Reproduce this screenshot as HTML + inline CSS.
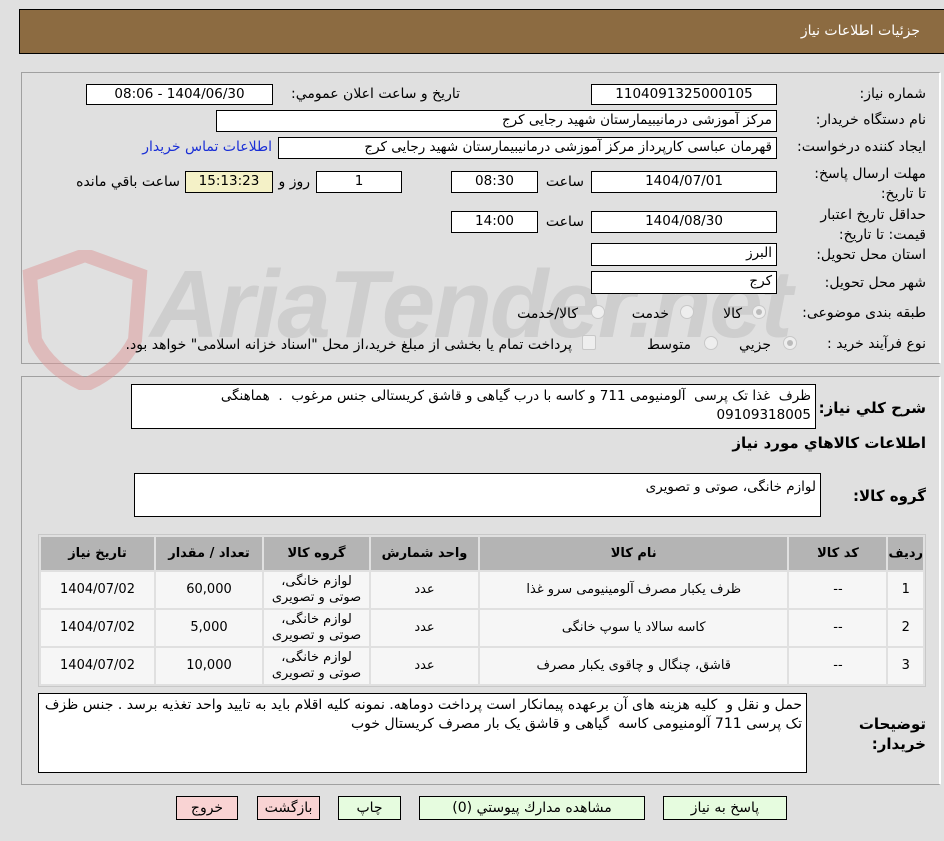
<!DOCTYPE html>
<html><head><meta charset="utf-8"><style>
body{margin:0;width:944px;height:841px;background:#e0e0e0;position:relative;overflow:hidden;font-family:Tahoma,"DejaVu Sans","Noto Sans CJK SC",sans-serif;font-size:13px;color:#000;direction:rtl}
.a{position:absolute}
.hdr{left:19px;top:9px;width:930px;height:43px;background:#8c6b41;border:1px solid #000;border-right:none}
.hdr span{position:absolute;right:30px;top:13px;color:#fff;font-size:14px}
.pan{border:1px solid #a0a0a0;border-right:2px solid #fff;background:#e0e0e0}
.in{position:absolute;background:#fff;border:1px solid #000;box-sizing:border-box;padding:0 4px;line-height:19px;font-size:13.5px;white-space:nowrap;overflow:hidden}
.c{text-align:center}
.l{position:absolute;font-size:14px;white-space:nowrap}
.rad{position:absolute;width:12px;height:12px;border-radius:50%;border:1px solid #c8c8c8;background:#eee}
.rad.s::after{content:"";position:absolute;left:3px;top:3px;width:6px;height:6px;border-radius:50%;background:#bbb}
table{border-collapse:separate;border-spacing:2px;position:absolute;left:38px;top:534px;width:888px;background:#e0e0e0;border:1px solid #c8c8c8}
th{background:#b4b4b4;height:33px;padding:0;font-size:13px;font-weight:bold}
td{background:#f6f6f6;height:36px;padding:0;text-align:center;font-size:13px;line-height:16px}
.btn{position:absolute;top:796px;height:24px;border:1px solid #000;box-sizing:border-box;text-align:center;line-height:22px;font-size:14px}
.g{background:#e6fcdf}.r{background:#f9d3d3}
.wm{position:absolute;left:150px;top:250px;font-size:96px;color:rgba(185,185,185,0.45);font-family:"Liberation Sans",sans-serif;font-weight:bold;direction:ltr;letter-spacing:-2px;font-style:italic}
</style></head><body>
<div class="a hdr"><span>جزئيات اطلاعات نياز</span></div>
<div class="a pan" style="left:21px;top:72px;width:917px;height:290px"></div>
<div class="a pan" style="left:21px;top:376px;width:917px;height:407px"></div>
<div class="wm">AriaTender.net</div>
<svg class="a" style="left:20px;top:250px" width="130" height="140" viewBox="0 0 130 140"><path d="M65 5 L120 25 L115 90 Q100 120 65 135 Q30 120 15 90 L10 25 Z" fill="none" stroke="rgba(220,150,150,0.5)" stroke-width="14"/></svg>

<div class="l" style="right:18px;top:86px">شماره نیاز:</div>
<div class="in c" style="left:591px;top:84px;width:186px;height:21px">1104091325000105</div>
<div class="l" style="right:484px;top:86px">تاريخ و ساعت اعلان عمومي:</div>
<div class="in c" style="left:86px;top:84px;width:187px;height:21px">1404/06/30 - 08:06</div>

<div class="l" style="right:18px;top:112px">نام دستگاه خریدار:</div>
<div class="in" style="left:216px;top:110px;width:561px;height:22px">مرکز آموزشی درمانیبیمارستان شهید رجایی کرج</div>

<div class="l" style="right:18px;top:139px">ایجاد کننده درخواست:</div>
<div class="in" style="left:278px;top:137px;width:499px;height:22px">قهرمان عباسی کارپرداز مرکز آموزشی درمانیبیمارستان شهید رجایی کرج</div>
<div class="l" style="right:672px;top:139px;color:#1a2fd6">اطلاعات تماس خریدار</div>

<div class="l" style="right:18px;top:164px;line-height:20px;width:115px;white-space:normal">مهلت ارسال پاسخ: تا تاریخ:</div>
<div class="in c" style="left:591px;top:171px;width:186px;height:22px">1404/07/01</div>
<div class="l" style="right:360px;top:174px">ساعت</div>
<div class="in c" style="left:451px;top:171px;width:87px;height:22px">08:30</div>
<div class="in c" style="left:316px;top:171px;width:86px;height:22px">1</div>
<div class="l" style="right:634px;top:174px">روز و</div>
<div class="in c" style="left:185px;top:171px;width:88px;height:22px;background:#f4f1c7">15:13:23</div>
<div class="l" style="right:764px;top:174px">ساعت باقي مانده</div>

<div class="l" style="right:18px;top:205px;line-height:20px;width:115px;white-space:normal">حداقل تاریخ اعتبار قیمت: تا تاریخ:</div>
<div class="in c" style="left:591px;top:211px;width:186px;height:22px">1404/08/30</div>
<div class="l" style="right:360px;top:214px">ساعت</div>
<div class="in c" style="left:451px;top:211px;width:87px;height:22px">14:00</div>

<div class="l" style="right:18px;top:247px">استان محل تحویل:</div>
<div class="in" style="left:591px;top:243px;width:186px;height:23px">البرز</div>
<div class="l" style="right:18px;top:275px">شهر محل تحویل:</div>
<div class="in" style="left:591px;top:271px;width:186px;height:23px">کرج</div>

<div class="l" style="right:18px;top:305px">طبقه بندی موضوعی:</div>
<div class="rad s" style="left:752px;top:305px"></div><div class="l" style="right:202px;top:306px">کالا</div>
<div class="rad" style="left:680px;top:305px"></div><div class="l" style="right:275px;top:306px">خدمت</div>
<div class="rad" style="left:591px;top:305px"></div><div class="l" style="right:366px;top:306px">کالا/خدمت</div>

<div class="l" style="right:18px;top:336px">نوع فرآیند خرید :</div>
<div class="rad s" style="left:783px;top:336px"></div><div class="l" style="right:173px;top:337px">جزيي</div>
<div class="rad" style="left:704px;top:336px"></div><div class="l" style="right:253px;top:337px">متوسط</div>
<div class="a" style="left:582px;top:335px;width:12px;height:13px;border:1px solid #c8c8c8;background:#eee;border-radius:2px"></div>
<div class="l" style="right:372px;top:337px">پرداخت تمام یا بخشی از مبلغ خرید،از محل "اسناد خزانه اسلامی" خواهد بود.</div>

<div class="l" style="right:18px;top:399px;font-weight:bold;font-size:15px">شرح كلي نياز:</div>
<div class="in" style="left:131px;top:384px;width:685px;height:45px;white-space:normal;line-height:19px;padding-top:2px">ظرف&nbsp; غذا تک پرسی&nbsp; آلومنیومی 711 و کاسه با درب گیاهی و قاشق کریستالی جنس مرغوب&nbsp; .&nbsp; هماهنگی 09109318005</div>
<div class="l" style="right:18px;top:434px;font-weight:bold;font-size:15px">اطلاعات کالاهاي مورد نياز</div>

<div class="l" style="right:18px;top:487px;font-weight:bold;font-size:15px">گروه کالا:</div>
<div class="in" style="left:134px;top:473px;width:687px;height:44px;padding-top:4px">لوازم خانگی، صوتی و تصویری</div>

<table>
<tr><th style="width:33px">رديف</th><th style="width:97px">کد کالا</th><th>نام کالا</th><th style="width:107px">واحد شمارش</th><th style="width:105px">گروه کالا</th><th style="width:106px">تعداد / مقدار</th><th style="width:113px">تاريخ نياز</th></tr>
<tr><td>1</td><td>--</td><td>ظرف یکبار مصرف آلومینیومی سرو غذا</td><td>عدد</td><td>لوازم خانگی،<br>صوتی و تصویری</td><td>60,000</td><td>1404/07/02</td></tr>
<tr><td>2</td><td>--</td><td>کاسه سالاد یا سوپ خانگی</td><td>عدد</td><td>لوازم خانگی،<br>صوتی و تصویری</td><td>5,000</td><td>1404/07/02</td></tr>
<tr><td>3</td><td>--</td><td>قاشق، چنگال و چاقوی یکبار مصرف</td><td>عدد</td><td>لوازم خانگی،<br>صوتی و تصویری</td><td>10,000</td><td>1404/07/02</td></tr>
</table>

<div class="l" style="right:18px;top:714px;font-weight:bold;font-size:15px;line-height:20px">توضیحات<br>خریدار:</div>
<div class="in" style="left:38px;top:693px;width:769px;height:80px;white-space:normal;line-height:19px;padding-top:2px;font-size:14px">حمل و نقل و&nbsp; کلیه هزینه های آن برعهده پیمانکار است پرداخت دوماهه. نمونه کلیه اقلام باید به تایید واحد تغذیه برسد . جنس ظزف تک پرسی 711 آلومنیومی کاسه&nbsp; گیاهی و قاشق یک بار مصرف کریستال خوب</div>

<div class="btn g" style="left:663px;width:124px">پاسخ به نياز</div>
<div class="btn g" style="left:419px;width:226px">مشاهده مدارك پيوستي (0)</div>
<div class="btn g" style="left:338px;width:63px">چاپ</div>
<div class="btn r" style="left:257px;width:63px">بازگشت</div>
<div class="btn r" style="left:176px;width:62px">خروج</div>
</body></html>
